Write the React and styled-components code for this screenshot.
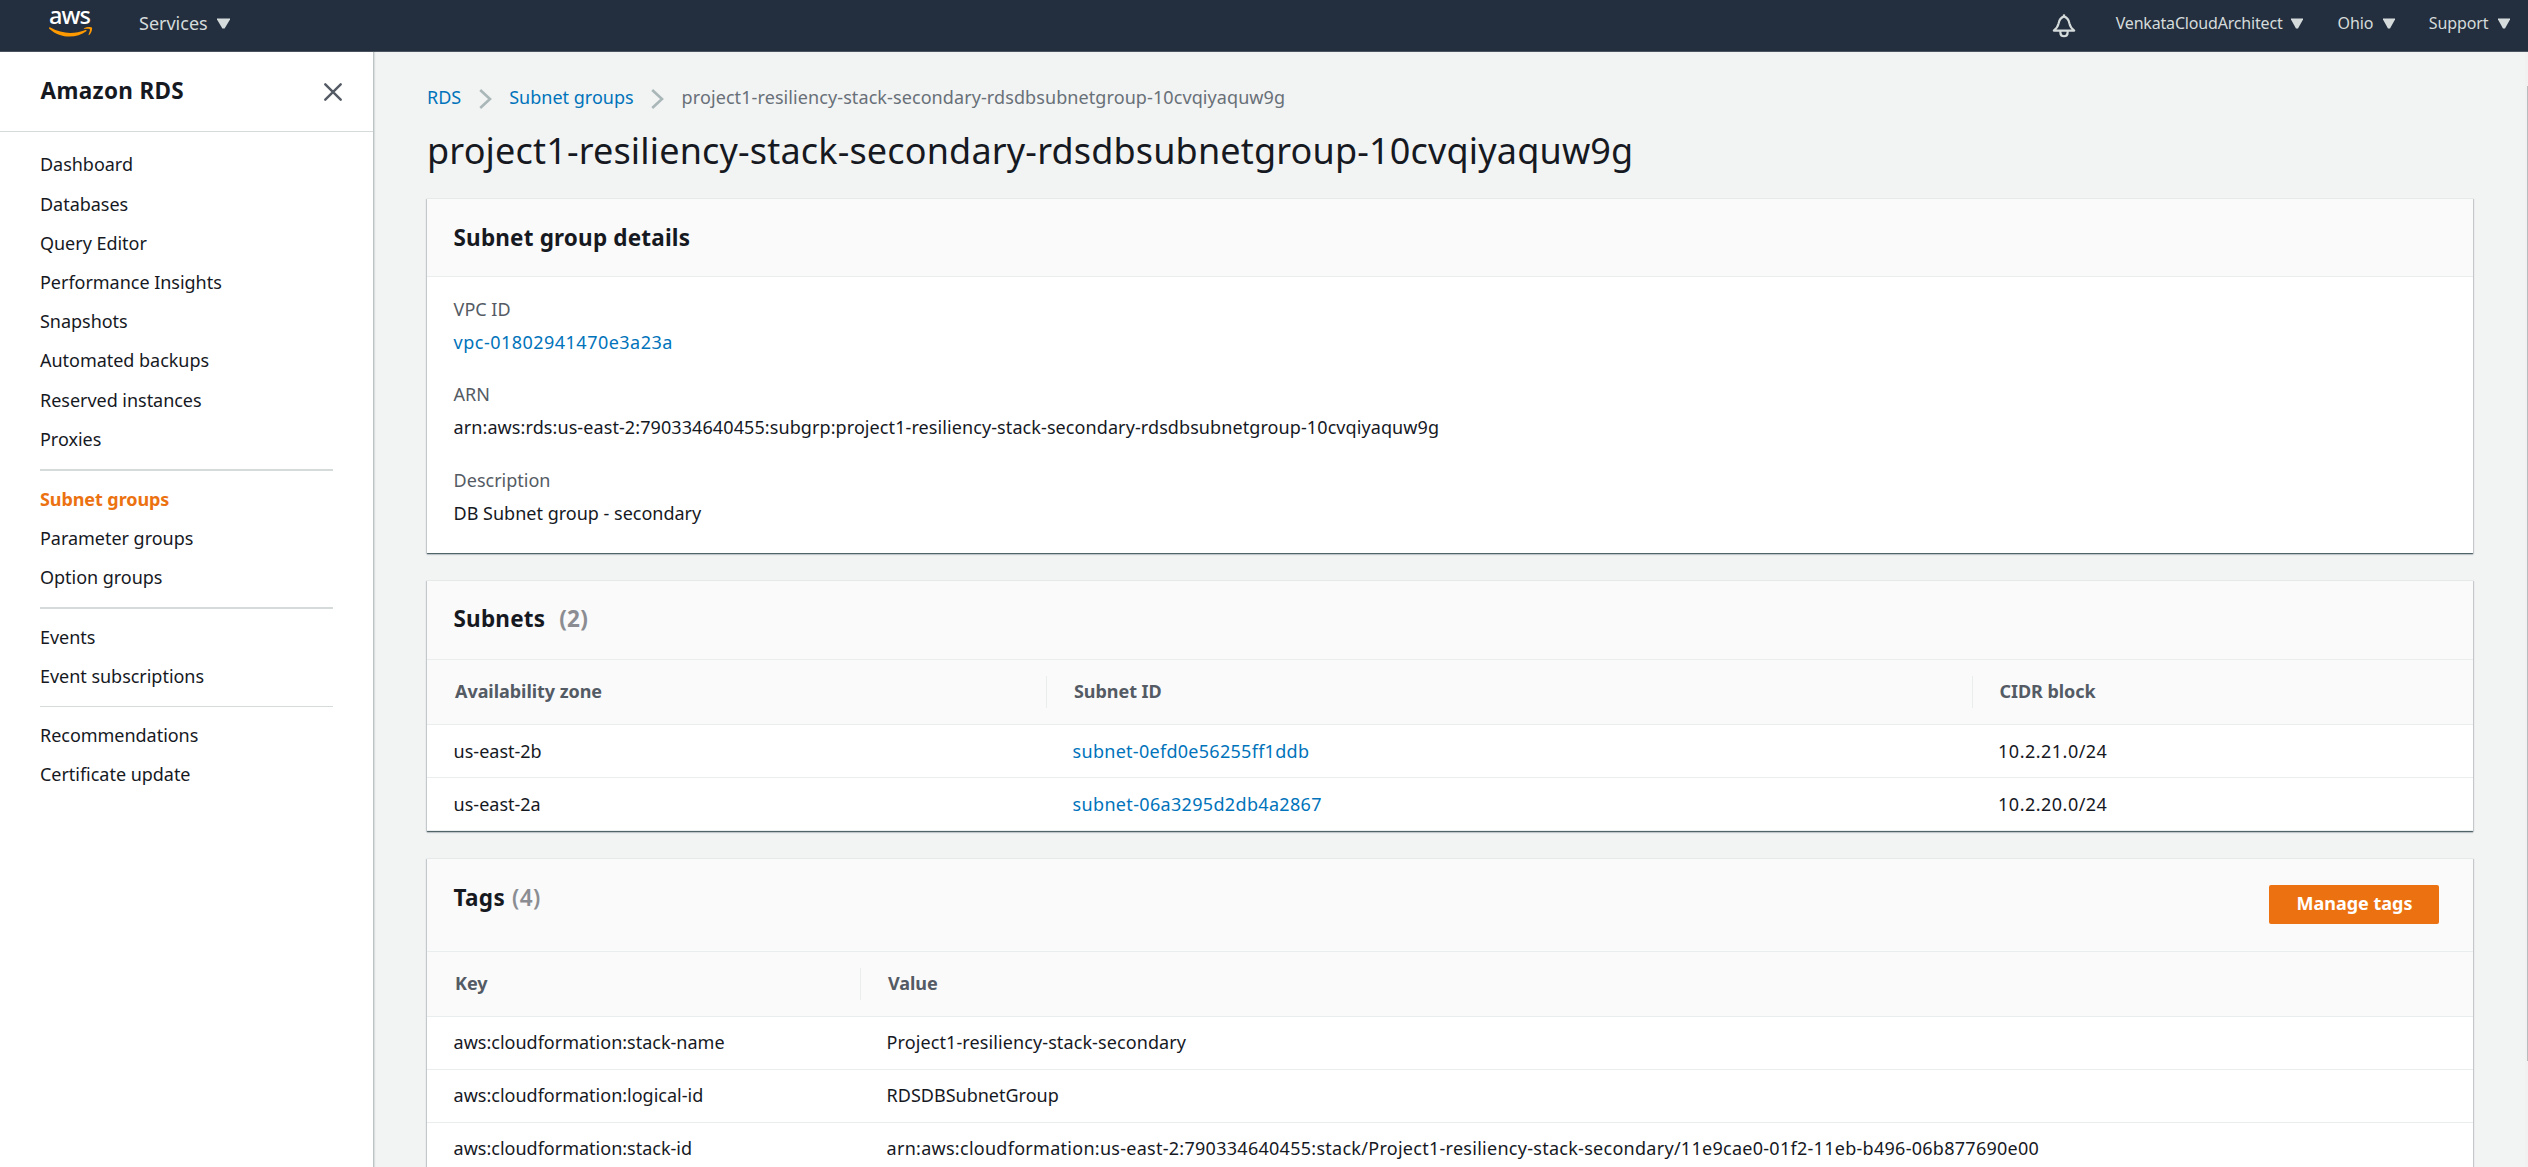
import React from 'react';
import styled, { createGlobalStyle } from 'styled-components';

const GlobalStyle = createGlobalStyle`
  *, *::before, *::after { box-sizing: border-box; }
  body {
    margin: 0;
    background: #f2f3f3;
    color: #16191f;
    font-family: "Noto Sans", "Open Sans", sans-serif;
    font-size: 18px;
    overflow: hidden;
  }
  h1, h2, h3, ul, dl, dd, nav { margin: 0; padding: 0; }
  a { color: inherit; text-decoration: none; }
`;

const Page = styled.div`
  display: flex;
  flex-direction: column;
  height: 1167px;
  overflow: hidden;
`;

/* ---------- top bar ---------- */

const TopBar = styled.header`
  display: flex;
  align-items: center;
  flex: none;
  height: 52px;
  padding: 0 18px 5px 48px;
  background: #232f3e;
  border-bottom: 1px solid #4b545f;
  color: #d5dbdb;
`;

const Logo = styled.a`
  display: flex;
  flex-direction: column;
  width: 45px;
  height: 46px;
  margin-right: 46px;
`;

const LogoText = styled.span`
  height: 27px;
  padding-left: 1px;
  color: #fff;
  font-size: 23.5px;
  font-weight: 500;
  line-height: 30px;
  letter-spacing: -0.9px;
`;

const TopMenu = styled.button`
  display: flex;
  align-items: center;
  gap: ${p => p.$gap}px;
  margin: 0 0 0 ${p => p.$before || 0}px;
  padding: 0;
  border: 0;
  background: none;
  color: #d5dbdb;
  font: inherit;
  font-size: ${p => p.$size}px;
  line-height: 26px;
  letter-spacing: ${p => p.$track || 0}px;
`;

const Spacer = styled.div`
  flex: 1;
`;

const Bell = styled.svg`
  flex: none;
  margin-top: 5px;
`;

const Caret = ({ width }) => (
  <svg width={width} height="11" viewBox="0 0 13 11" preserveAspectRatio="none" fill="#d5dbdb">
    <path d="M0 0.4H13V1.6L7.6 10.6H5.4L0 1.6Z" />
  </svg>
);

/* ---------- shell ---------- */

const Shell = styled.div`
  display: flex;
  flex: 1;
  min-height: 0;
`;

const Sidebar = styled.aside`
  flex: none;
  width: 374px;
  background: #fff;
  border-right: 1px solid #bcc4c5;
  box-shadow: 1px 0 1px rgba(0, 28, 36, 0.1);
`;

const SidebarHead = styled.div`
  display: flex;
  align-items: center;
  justify-content: space-between;
  height: 80px;
  padding: 0 31px 0 40.5px;
  border-bottom: 1px solid #d5dbdb;
`;

const SidebarTitle = styled.h2`
  margin-bottom: 2px;
  font-size: 22.5px;
  font-weight: 700;
  line-height: 28px;
  letter-spacing: 0.33px;
`;

const Nav = styled.nav`
  padding: 13.4px 40px 0 40px;
`;

const NavItem = styled.a`
  display: block;
  height: 39.2px;
  line-height: 39.2px;
  color: ${p => (p.$active ? '#ec7211' : '#16191f')};
  font-weight: ${p => (p.$active ? 700 : 400)};
  letter-spacing: ${p => (p.$active ? -0.08 : -0.03)}px;
  font-variant-ligatures: common-ligatures;
`;

const NavRule = styled.div`
  height: ${p => p.$thick}px;
  margin: 9.8px 0 9px;
  background: #d5dbdb;
`;

const Main = styled.main`
  flex: 1;
  min-width: 0;
  padding: 32px 52px 0 53px;
`;

const ScrollTrack = styled.div`
  flex: none;
  width: 3px;
  padding: 34px 0 0 2px;
  background: #f1f1f1;
`;

const ScrollThumb = styled.div`
  height: 975px;
  background: #b9bcbc;
`;

/* ---------- page heading ---------- */

const Breadcrumbs = styled.nav`
  display: flex;
  align-items: center;
  height: 26px;
  color: #687078;
`;

const Crumb = styled.a`
  color: ${p => (p.$current ? '#687078' : '#0073bb')};
  letter-spacing: ${p => p.$track || 0}px;
  line-height: 26px;
`;

const CrumbArrow = styled.svg`
  flex: none;
  margin: 3px 17.5px 0;
`;

const PageTitle = styled.h1`
  margin: 16px 0 22px;
  font-size: 36px;
  font-weight: 400;
  line-height: 50px;
  letter-spacing: 0.17px;
  white-space: nowrap;
`;

/* ---------- cards ---------- */

const Card = styled.section`
  margin-bottom: 27px;
  background: #fff;
  border-top: 1px solid #e6e9e9;
  box-shadow:
    0 1px 0 0 rgba(0, 28, 36, 0.42),
    0 2px 1px 0 rgba(0, 28, 36, 0.16),
    1px 1px 1px 0 rgba(0, 28, 36, 0.17),
    -1px 1px 1px 0 rgba(0, 28, 36, 0.17);
`;

const CardHead = styled.div`
  display: flex;
  align-items: ${p => (p.$top ? 'flex-start' : 'center')};
  justify-content: space-between;
  height: ${p => p.$height}px;
  padding: ${p => (p.$top ? '19px 34px 0 26.5px' : '0 34px ' + (p.$lift || 0) + 'px 26.5px')};
  background: #fafafa;
  border-bottom: 1px solid #eaeded;
`;

const CardTitle = styled.h3`
  font-size: 22.5px;
  font-weight: 700;
  line-height: 39px;
  letter-spacing: ${p => p.$track}px;
`;

const Count = styled.span`
  margin-left: ${p => p.$space}px;
  color: #8b8d92;
  font-weight: ${p => p.$weight};
`;

const PrimaryButton = styled.button`
  width: 170px;
  height: 39px;
  margin-top: 7px;
  padding: 0 0 3px 1px;
  border: 0;
  border-radius: 2px;
  background: #ec7211;
  color: #fff;
  font: inherit;
  font-weight: 700;
`;

const Details = styled.dl`
  display: flex;
  flex-direction: column;
  gap: 20px;
  height: 276px;
  padding: 15.8px 26px 0 26.6px;
`;

const Field = styled.div`
  line-height: 32.8px;
  white-space: nowrap;
`;

const FieldLabel = styled.dt`
  color: #545b64;
`;

const FieldValue = styled.dd`
  letter-spacing: ${p => p.$track || 0}px;
  color: ${p => (p.$link ? '#0073bb' : '#16191f')};
`;

/* ---------- tables ---------- */

const Row = styled.div`
  display: grid;
  grid-template-columns: ${p => p.$columns};
  height: 53px;
  border-bottom: 1px solid #eaeded;
`;

const HeadRow = styled(Row)`
  align-items: center;
  height: 65px;
  background: #fafafa;
`;

const HeadCell = styled.div`
  height: 32px;
  padding-left: 27px;
  border-left: 1px solid #eaeded;
  color: #545b64;
  font-weight: 700;
  line-height: 30px;
  letter-spacing: -0.05px;

  &:first-child { border-left-color: transparent; }
`;

const Cell = styled.div`
  padding-left: 26.6px;
  line-height: ${p => p.$line || 52}px;
  white-space: nowrap;
  color: ${p => (p.$link ? '#0073bb' : '#16191f')};
  letter-spacing: ${p => p.$track || 0}px;
`;

const subnetColumns = '619px 925.5px 1fr';
const tagColumns = '433px 1fr';

const navGroups = [
  {
    items: ['Dashboard', 'Databases', 'Query Editor', 'Performance Insights', 'Snapshots',
      'Automated backups', 'Reserved instances', 'Proxies'],
    rule: 2,
  },
  { items: ['Subnet groups', 'Parameter groups', 'Option groups'], rule: 2 },
  { items: ['Events', 'Event subscriptions'], rule: 1 },
  { items: ['Recommendations', 'Certificate update'] },
];

const groupName = 'project1-resiliency-stack-secondary-rdsdbsubnetgroup-10cvqiyaquw9g';

const subnets = [
  { zone: 'us-east-2b', id: 'subnet-0efd0e56255ff1ddb', cidr: '10.2.21.0/24', track: 0.28 },
  { zone: 'us-east-2a', id: 'subnet-06a3295d2db4a2867', cidr: '10.2.20.0/24', track: 0.33 },
];

const tags = [
  { key: 'aws:cloudformation:stack-name', value: 'Project1-resiliency-stack-secondary', track: 0.1 },
  { key: 'aws:cloudformation:logical-id', value: 'RDSDBSubnetGroup', track: 0 },
  {
    key: 'aws:cloudformation:stack-id',
    value: 'arn:aws:cloudformation:us-east-2:790334640455:stack/Project1-resiliency-stack-secondary/11e9cae0-01f2-11eb-b496-06b877690e00',
    track: 0.275,
  },
];

const Arrow = () => (
  <CrumbArrow width="13" height="20" viewBox="0 0 13 20" fill="none" stroke="#aab7b8" strokeWidth="2.6">
    <path d="M1.2 1L11 10L1.2 19" />
  </CrumbArrow>
);

export default function App() {
  return (
    <Page>
      <GlobalStyle />
      <TopBar>
        <Logo>
          <LogoText>aws</LogoText>
          <svg width="45" height="11" viewBox="0 0 45 11" fill="#ff9900">
            <path d="M1 0.9C1.2 0.3 1.7 0.2 2.4 0.6C14.5 7.4 26.5 7.2 37.4 3C38.4 2.6 39.2 3.6 38.3 4.3C28.5 11.6 12.5 11.8 1.5 2C1.1 1.7 0.9 1.3 1 0.9Z" />
            <path d="M36 1.4C38.4 -0.2 42.8 -0.3 43.8 0.6C44.7 1.6 43.4 6.1 41.2 8C40.8 8.3 40.4 8.1 40.6 7.6C41.2 6 42.4 3 41.8 2.2C41.1 1.5 38 1.8 36.4 2C35.8 2 35.6 1.7 36 1.4Z" />
          </svg>
        </Logo>
        <TopMenu $size={18} $gap={9.5}>Services <Caret width={13} /></TopMenu>
        <Spacer />
        <Bell width="24" height="24" viewBox="0 0 24 24" fill="none" stroke="#d5dbdb" strokeWidth="2.2" strokeLinejoin="round">
          <path d="M1.8 16.6C4.6 14.4 6 12.4 6.6 9.4C7.2 5.6 8.6 3.6 12 2.4C15.4 3.6 16.8 5.6 17.4 9.4C18 12.4 19.4 14.4 22.2 16.6Z" />
          <path d="M8.4 17V18.8C8.4 23.4 15.6 23.4 15.6 18.8V17" />
          <path d="M12 0.4V2.6" />
        </Bell>
        <TopMenu $size={16} $gap={9} $before={40} $track={-0.18}>VenkataCloudArchitect <Caret width={12} /></TopMenu>
        <TopMenu $size={16} $gap={10} $before={34} $track={-0.1}>Ohio <Caret width={12} /></TopMenu>
        <TopMenu $size={16} $gap={9.5} $before={33.5} $track={-0.1}>Support <Caret width={12} /></TopMenu>
      </TopBar>

      <Shell>
        <Sidebar>
          <SidebarHead>
            <SidebarTitle>Amazon RDS</SidebarTitle>
            <svg width="18" height="18" viewBox="0 0 18 18" stroke="#545b64" strokeWidth="2.4" strokeLinecap="round">
              <path d="M1.3 1.3L16.7 16.7M16.7 1.3L1.3 16.7" />
            </svg>
          </SidebarHead>
          <Nav>
            {navGroups.map(group => (
              <React.Fragment key={group.items[0]}>
                {group.items.map(item => (
                  <NavItem key={item} $active={item === 'Subnet groups'}>{item}</NavItem>
                ))}
                {group.rule && <NavRule $thick={group.rule} />}
              </React.Fragment>
            ))}
          </Nav>
        </Sidebar>

        <Main>
          <Breadcrumbs>
            <Crumb>RDS</Crumb>
            <Arrow />
            <Crumb>Subnet groups</Crumb>
            <Arrow />
            <Crumb $current $track={0.09}>{groupName}</Crumb>
          </Breadcrumbs>
          <PageTitle>{groupName}</PageTitle>

          <Card>
            <CardHead $height={78}>
              <CardTitle $track={0.18}>Subnet group details</CardTitle>
            </CardHead>
            <Details>
              <Field>
                <FieldLabel>VPC ID</FieldLabel>
                <FieldValue $link $track={0.48}>vpc-01802941470e3a23a</FieldValue>
              </Field>
              <Field>
                <FieldLabel>ARN</FieldLabel>
                <FieldValue $track={0.09}>arn:aws:rds:us-east-2:790334640455:subgrp:{groupName}</FieldValue>
              </Field>
              <Field>
                <FieldLabel>Description</FieldLabel>
                <FieldValue>DB Subnet group - secondary</FieldValue>
              </Field>
            </Details>
          </Card>

          <Card>
            <CardHead $height={79} $lift={3}>
              <CardTitle $track={0.2}>Subnets<Count $space={14} $weight={700}>(2)</Count></CardTitle>
            </CardHead>
            <HeadRow $columns={subnetColumns}>
              <HeadCell>Availability zone</HeadCell>
              <HeadCell>Subnet ID</HeadCell>
              <HeadCell>CIDR block</HeadCell>
            </HeadRow>
            {subnets.map(subnet => (
              <Row key={subnet.id} $columns={subnetColumns}>
                <Cell>{subnet.zone}</Cell>
                <Cell $link $track={subnet.track}>{subnet.id}</Cell>
                <Cell $track={0.48}>{subnet.cidr}</Cell>
              </Row>
            ))}
          </Card>

          <Card>
            <CardHead $height={93} $top>
              <CardTitle $track={0.35}>Tags<Count $space={7} $weight={600}>(4)</Count></CardTitle>
              <PrimaryButton>Manage tags</PrimaryButton>
            </CardHead>
            <HeadRow $columns={tagColumns}>
              <HeadCell>Key</HeadCell>
              <HeadCell>Value</HeadCell>
            </HeadRow>
            {tags.map(tag => (
              <Row key={tag.key} $columns={tagColumns}>
                <Cell $line={50}>{tag.key}</Cell>
                <Cell $line={50} $track={tag.track}>{tag.value}</Cell>
              </Row>
            ))}
          </Card>
        </Main>

        <ScrollTrack>
          <ScrollThumb />
        </ScrollTrack>
      </Shell>
    </Page>
  );
}
